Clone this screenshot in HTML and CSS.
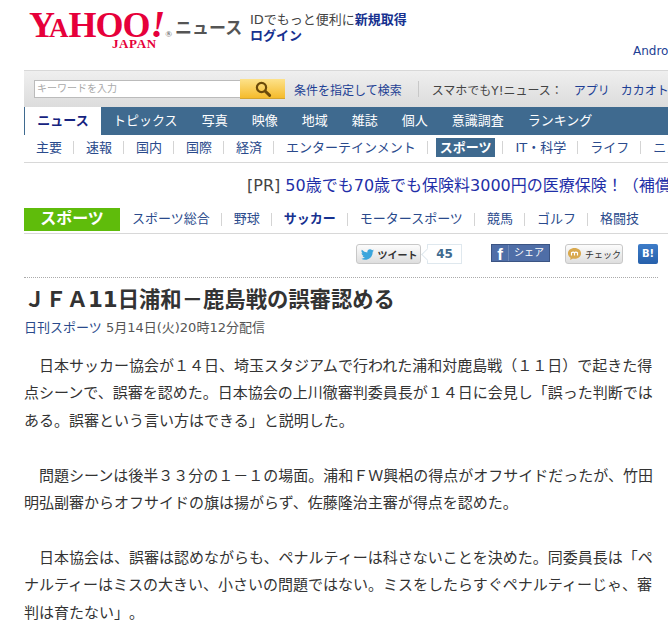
FILE: index.html
```html
<!DOCTYPE html>
<html lang="ja">
<head>
<meta charset="utf-8">
<title>JFA11日浦和－鹿島戦の誤審認める</title>
<link rel="stylesheet" href="styles.css">
</head>
<body>
<div class="page">
  <header class="masthead">
    <div class="logo">
      <div class="logo-main"><span class="cap">Y</span><span class="small">A</span><span class="cap">H</span><span class="cap o">O</span><span class="cap o">O</span><span class="bang">!</span><span class="reg">®</span></div>
      <div class="logo-sub">JAPAN</div>
    </div>
    <div class="brand">ニュース</div>
    <div class="id-box">
      <div>IDでもっと便利に<a class="strong" href="#">新規取得</a></div>
      <div><a class="strong" href="#">ログイン</a></div>
    </div>
    <a class="android" href="#">Android</a>
  </header>

  <div class="searchbar">
    <div class="search-input">キーワードを入力</div>
    <div class="search-btn">
      <svg width="18" height="18" viewBox="0 0 18 18"><circle cx="7.5" cy="7.5" r="4.6" fill="none" stroke="#6b4a0a" stroke-width="2.2"/><path d="M11 11l4.6 4.4" stroke="#6b4a0a" stroke-width="3" stroke-linecap="round"/></svg>
    </div>
    <a class="search-adv" href="#">条件を指定して検索</a>
    <span class="search-sep"></span>
    <span class="search-label">スマホでもY!ニュース：</span>
    <a class="search-app" href="#">アプリ</a>
    <a class="search-app" href="#">カカオトーク</a>
  </div>

  <nav class="tabs">
    <a class="tab active" href="#">ニュース</a>
    <a class="tab" href="#">トピックス</a>
    <a class="tab" href="#">写真</a>
    <a class="tab" href="#">映像</a>
    <a class="tab" href="#">地域</a>
    <a class="tab" href="#">雑誌</a>
    <a class="tab" href="#">個人</a>
    <a class="tab" href="#">意識調査</a>
    <a class="tab" href="#">ランキング</a>
  </nav>

  <nav class="subnav">
    <a href="#">主要</a><i></i>
    <a href="#">速報</a><i></i>
    <a href="#">国内</a><i></i>
    <a href="#">国際</a><i></i>
    <a href="#">経済</a><i></i>
    <a href="#">エンターテインメント</a><i></i>
    <a class="current" href="#">スポーツ</a><i></i>
    <a href="#">IT・科学</a><i></i>
    <a href="#">ライフ</a><i></i>
    <a href="#">ニュース</a>
  </nav>

  <div class="pr"><span>[PR]</span> <a href="#">50歳でも70歳でも保険料3000円の医療保険！（補償内容はこちら）</a></div>

  <nav class="sportnav">
    <div class="sport-title">スポーツ</div>
    <a href="#">スポーツ総合</a><i></i>
    <a href="#">野球</a><i></i>
    <a class="bold" href="#">サッカー</a><i></i>
    <a href="#">モータースポーツ</a><i></i>
    <a href="#">競馬</a><i></i>
    <a href="#">ゴルフ</a><i></i>
    <a href="#">格闘技</a>
  </nav>

  <main class="article">
    <div class="share">
      <div class="btn tweet">
        <svg width="15" height="13" viewBox="0 0 24 24"><path fill="#3aa5dc" d="M23.95 4.57a10 10 0 0 1-2.82.77 4.96 4.96 0 0 0 2.16-2.72 9.9 9.9 0 0 1-3.12 1.18 4.92 4.92 0 0 0-8.38 4.48A13.98 13.98 0 0 1 1.64 3.16a4.92 4.92 0 0 0 1.52 6.57 4.9 4.9 0 0 1-2.23-.61v.06a4.92 4.92 0 0 0 3.95 4.83 5 5 0 0 1-2.21.08 4.94 4.94 0 0 0 4.6 3.42A9.87 9.87 0 0 1 0 19.54a13.94 13.94 0 0 0 7.55 2.21c9.05 0 14-7.5 14-13.98 0-.21 0-.42-.01-.63a10 10 0 0 0 2.41-2.57z"/></svg>
        <span>ツイート</span>
      </div>
      <div class="count">45</div>
      <div class="fb"><span class="fb-f">f</span><span class="fb-t">シェア</span></div>
      <div class="btn mixi">
        <svg width="15" height="14" viewBox="0 0 16 14"><path fill="#d9a94f" d="M8 .5c4 0 7 2.400 7 5.800s-3 5.800-7 5.800c-.6 0-1.200 0-1.700-.2L3.400 13.500l.4-2.600C2 9.900 1 8.200 1 6.300 1 2.900 4 .5 8 .5z"/><path fill="none" stroke="#fff" stroke-width="1.200" d="M4.800 8.500V5.200M8 8.500V5.200M11.200 8.500V5.200M4.800 5.700c1-.9 2.400-.9 3.200 0 .8-.9 2.200-.9 3.200 0"/></svg>
        <span>チェック</span>
      </div>
      <div class="hatena">B!</div>
    </div>

    <h1 class="title">ＪＦＡ11日浦和－鹿島戦の誤審認める</h1>
    <p class="meta"><a href="#">日刊スポーツ</a> 5月14日(火)20時12分配信</p>

    <div class="body-text">
      <p>　日本サッカー協会が１４日、埼玉スタジアムで行われた浦和対鹿島戦（１１日）で起きた得点シーンで、誤審を認めた。日本協会の上川徹審判委員長が１４日に会見し「誤った判断ではある。誤審という言い方はできる」と説明した。</p>
      <p>　問題シーンは後半３３分の１－１の場面。浦和ＦＷ興梠の得点がオフサイドだったが、竹田明弘副審からオフサイドの旗は揚がらず、佐藤隆治主審が得点を認めた。</p>
      <p>　日本協会は、誤審は認めながらも、ペナルティーは科さないことを決めた。同委員長は「ペナルティーはミスの大きい、小さいの問題ではない。ミスをしたらすぐペナルティーじゃ、審判は育たない」。</p>
    </div>
  </main>
</div>
</body>
</html>
```
FILE: styles.css
```css
* { box-sizing: border-box; }
html, body { margin: 0; padding: 0; height: 643px; overflow: hidden; background: #fff; }
body { font-family: "DejaVu Sans", "Noto Sans CJK JP", sans-serif; color: #333; text-spacing-trim: space-all; }
a { color: #1d3f94; text-decoration: none; }
.page { width: 900px; padding-left: 24px; }

.masthead { height: 70px; display: flex; position: relative; }
.logo { width: 147px; margin-left: 5px; padding-top: 10px; color: #e6003a; font-family: "Liberation Serif", serif; font-weight: bold; }
.logo-main { display: flex; align-items: baseline; height: 28px; line-height: 28px; white-space: nowrap; }
.cap { font-size: 36px; letter-spacing: -1px; }
.small { font-size: 27px; margin-left: -5px; margin-right: 1px; letter-spacing: -1px; }
.o { font-size: 36px; }
.bang { font-size: 38px; font-style: italic; margin-left: 1px; }
.reg { font-size: 9px; color: #777; margin-left: 0; }
.logo-sub { font-size: 13px; line-height: 12px; margin: 0 0 0 83px; letter-spacing: 0.6px; }
.brand { font-size: 17px; font-weight: 700; color: #555; margin-left: -1px; padding-top: 15px; line-height: 27px; width: 75px; }
.id-box { padding-top: 12px; font-size: 13px; line-height: 16px; color: #444; white-space: nowrap; }
.strong { font-weight: 700; color: #16318f; }
.android { position: absolute; left: 609px; top: 43px; font-size: 12px; line-height: 16px; }

.searchbar { height: 37px; width: 800px; background: linear-gradient(#efefef, #dcdcdc); border-top: 1px solid #d8d8d8; display: flex; align-items: center; padding-left: 10px; font-size: 12px; white-space: nowrap; }
.search-input { width: 206px; height: 18px; background: #fff; border: 1px solid #bbb; border-right: 0; color: #aaa; font-size: 10px; line-height: 16px; padding-left: 2px; }
.search-btn { width: 45px; height: 20px; background: linear-gradient(#fde28a, #f5bb2c); border-bottom: 1px solid #d5a530; display: flex; align-items: center; justify-content: center; }
.search-adv { margin-left: 9px; }
.search-sep { width: 1px; height: 16px; background: #c8c8c8; margin: 0 13px 0 16px; }
.search-label { color: #444; width: 142px; }
.search-app { margin-right: 11px; }

.tabs { height: 28px; width: 800px; background: #3f6a8f; display: flex; }
.tab { color: #fff; font-size: 13px; line-height: 27px; margin-left: 24px; white-space: nowrap; }
.tab:nth-child(2) { margin-left: 12px; }
.tab.active { margin-left: 0; width: 77px; background: #fff; color: #16237f; font-weight: 700; text-align: center; border-left: 1px solid #3f6a8f; }

.subnav { height: 28px; width: 800px; border-bottom: 1px solid #d8d8d8; display: flex; align-items: center; padding: 0 0 2px 12px; font-size: 13px; white-space: nowrap; }
.subnav a { color: #2a4a8c; line-height: 19px; }
.subnav i, .sportnav i { width: 1px; height: 13px; background: #d4d4d4; margin: 0 12px 0 11px; }
.subnav .current { background: #3f6a8f; color: #fff; font-weight: 700; padding: 0 4px; margin: 0 -4px; }

.pr { height: 45px; padding: 11px 0 0 223px; font-size: 16px; line-height: 24px; white-space: nowrap; color: #444; }
.pr a { color: #1f2fa8; }

.sportnav { height: 26px; width: 800px; border-bottom: 1px solid #d8d8d8; display: flex; align-items: flex-start; font-size: 13px; white-space: nowrap; }
.sportnav a { color: #2a4a8c; line-height: 21px; }
.sportnav i { margin-top: 5px; }
.sportnav .bold { font-weight: 700; color: #16318f; }
.sport-title { width: 96px; height: 23px; background: #5fbc0b; color: #fff; font-size: 16px; font-weight: 700; line-height: 22px; text-align: center; margin-right: 12px; }

.article { width: 634px; }
.share { height: 44px; border-bottom: 1px dotted #aaa; display: flex; align-items: flex-start; padding: 10px 0 0 332px; font-size: 10px; white-space: nowrap; }
.btn { height: 20px; background: linear-gradient(#fcfcfc, #dedede); border: 1px solid #c8c8c8; border-radius: 3px; display: flex; align-items: center; justify-content: center; gap: 3px; color: #333; font-weight: 700; }
.tweet { width: 65px; }
.count { width: 35px; height: 20px; margin-left: 6px; border: 1px solid #dfe8ee; text-align: center; color: #3f6a8f; font-size: 12px; font-weight: 700; line-height: 18px; position: relative; }
.count::before { content: ""; position: absolute; left: -5px; top: 5px; width: 8px; height: 8px; background: #fff; border-left: 1px solid #dfe8ee; border-bottom: 1px solid #dfe8ee; transform: rotate(45deg); }
.fb { width: 59px; height: 18px; margin-left: 29px; background: #4f6ea7; border: 1px solid #3b5483; color: #fff; display: flex; line-height: 16px; overflow: hidden; }
.fb-f { width: 17px; text-align: center; font-family: "Liberation Sans", sans-serif; font-size: 17px; font-weight: 700; line-height: 20px; border-right: 1px solid #6f88b7; }
.fb-t { flex: 1; text-align: center; }
.mixi { width: 58px; margin-left: 15px; font-weight: 400; font-size: 9px; }
.hatena { width: 20px; height: 20px; margin-left: 15px; background: linear-gradient(#3d7cc8, #2660ab); border-radius: 2px; color: #fff; font-size: 10px; font-weight: 700; line-height: 20px; text-align: center; }

.title { margin: 9px 0 0; font-size: 21.33px; font-weight: 700; line-height: 26px; color: #333; white-space: nowrap; }
.meta { margin: 6px 0 0; font-size: 13px; line-height: 18px; color: #555; }
.meta a { color: #2a4a8c; }
.body-text { margin-top: 16px; font-size: 15px; line-height: 27.4px; color: #333; }
.body-text p { margin: 0 0 27.4px; }
```
